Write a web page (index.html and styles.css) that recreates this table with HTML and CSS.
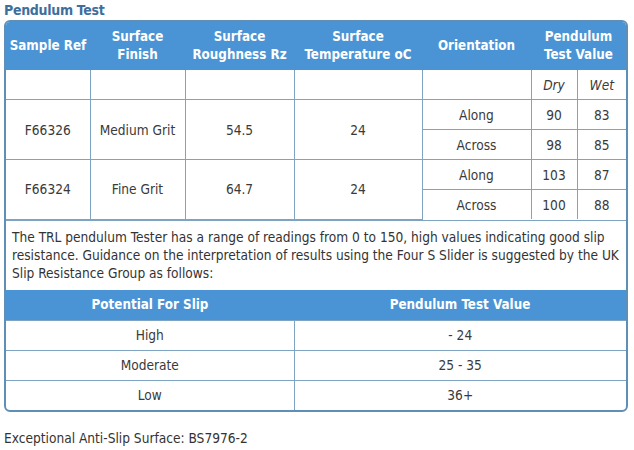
FILE: index.html
```html
<!DOCTYPE html>
<html>
<head>
<meta charset="utf-8">
<link rel="stylesheet" href="styles.css">
</head>
<body>
<h2 class="title">Pendulum Test</h2>
<div class="box">
  <table class="grid main">
    <colgroup>
      <col class="c1"><col class="c2"><col class="c3"><col class="c4"><col class="c5"><col class="c6"><col class="c7">
    </colgroup>
    <thead>
      <tr class="head">
        <th>Sample Ref</th>
        <th>Surface<br>Finish</th>
        <th>Surface<br>Roughness Rz</th>
        <th>Surface<br>Temperature oC</th>
        <th>Orientation</th>
        <th colspan="2">Pendulum<br>Test Value</th>
      </tr>
    </thead>
    <tbody>
      <tr class="row">
        <td></td><td></td><td></td><td></td><td></td><td class="it">Dry</td><td class="it">Wet</td>
      </tr>
      <tr class="row">
        <td rowspan="2">F66326</td><td rowspan="2">Medium Grit</td><td rowspan="2">54.5</td><td rowspan="2">24</td>
        <td>Along</td><td>90</td><td>83</td>
      </tr>
      <tr class="row">
        <td>Across</td><td>98</td><td>85</td>
      </tr>
      <tr class="row">
        <td rowspan="2">F66324</td><td rowspan="2">Fine Grit</td><td rowspan="2">64.7</td><td rowspan="2">24</td>
        <td>Along</td><td>103</td><td>87</td>
      </tr>
      <tr class="row">
        <td>Across</td><td>100</td><td>88</td>
      </tr>
    </tbody>
  </table>
  <p class="note">The TRL pendulum Tester has a range of readings from 0 to 150, high values indicating good slip resistance. Guidance on the interpretation of results using the Four S Slider is suggested by the UK Slip Resistance Group as follows:</p>
  <table class="grid slip">
    <colgroup><col class="s1"><col class="s2"></colgroup>
    <thead>
      <tr class="head2"><th>Potential For Slip</th><th>Pendulum Test Value</th></tr>
    </thead>
    <tbody>
      <tr class="row"><td>High</td><td>- 24</td></tr>
      <tr class="row"><td>Moderate</td><td>25 - 35</td></tr>
      <tr class="row last"><td>Low</td><td>36+</td></tr>
    </tbody>
  </table>
</div>
<p class="footer">Exceptional Anti-Slip Surface: BS7976-2</p>
</body>
</html>
```

FILE: styles.css
```css
html, body {
  margin: 0;
  padding: 0;
  background: #ffffff;
}
body {
  padding: 0 4px;
  font-family: "DejaVu Sans Condensed", "DejaVu Sans", sans-serif;
  font-size: 13.6px;
  color: #3a3a3a;
}
.title {
  margin: 0;
  padding-top: 1px;
  height: 19px;
  font-size: 14px;
  letter-spacing: -0.3px;
  line-height: 18px;
  font-weight: bold;
  color: #3d6f9c;
}
.box {
  width: 620px;
  border: 2px solid #5f8fb7;
  border-radius: 6px;
  overflow: hidden;
  background: #fff;
}
.grid {
  width: 100%;
  border-collapse: collapse;
  table-layout: fixed;
}
.c1 { width: 84px; }
.c2 { width: 95px; }
.c3 { width: 109px; }
.c4 { width: 128px; }
.c5 { width: 109px; }
.c6 { width: 46px; }
.c7 { width: 49px; }
.s1 { width: 288px; }
.s2 { width: 332px; }
.head th, .head2 th {
  background: #4a94d5;
  color: #ffffff;
  font-weight: bold;
  font-size: 13.3px;
  line-height: 18px;
  text-align: center;
  padding: 0;
}
.head th { height: 48px; }
.head2 th { height: 30px; }
.grid td {
  border: 1px solid #7ea4c1;
  text-align: center;
  height: 29px;
  padding: 0;
  line-height: 16px;
  color: #3a3a3a;
}
.grid td:first-child { border-left: none; }
.grid td:last-child { border-right: none; }
.main tbody tr:first-child td { border-top: none; }
.main tbody tr:last-child td { border-bottom: none; }
.slip .last td { border-bottom: none; }
.it { font-style: italic; }
.note {
  margin: 0;
  padding: 7px 6px 8px;
  line-height: 18px;
  border-top: 1px solid #7ea4c1;
  color: #333;
}
.footer {
  margin: 0;
  padding-top: 18px;
  color: #333;
}
```
